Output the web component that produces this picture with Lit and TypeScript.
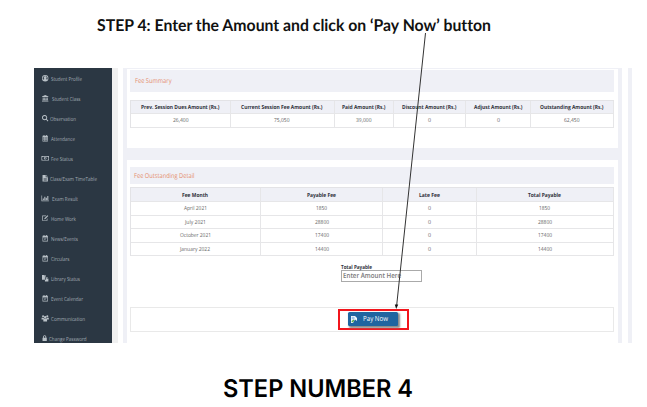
import { LitElement, html, svg, css } from "lit";
import { customElement } from "lit/decorators.js";

type Column = { title: string; titleWidth: number; cells: [string, number][] };

const label = (text: string, width: number, kind = "") => html`
  <svg class="label ${kind}" width=${width} height="10" viewBox="0 0 ${width} 10">
    <text x="0" y="7" textLength=${width} lengthAdjust="spacingAndGlyphs">${text}</text>
  </svg>`;

const calendar = svg`<path fill-rule="evenodd" d="M1 1.5h2V0h1.5v1.5h3V0H9v1.5h2V12H1zM2.2 4.5v6.3h7.6V4.5z"/><path d="M3.4 7l.8-.8 1.3 1.2 2.2-2 .8.9-3 2.9z"/>`;

const icons: Record<string, unknown> = {
  user: svg`<path fill-rule="evenodd" d="M6 0a6 6 0 110 12A6 6 0 016 0zm0 1.3A4.7 4.7 0 002.5 9.1c.5-1 1.2-1.5 2-1.6a2.8 2.8 0 113 0c.8.1 1.5.6 2 1.6A4.7 4.7 0 006 1.3z"/>`,
  bank: svg`<path d="M6 0l6 2.7v1H0v-1zM1.3 4.5h1.8v4.5h1.2V4.5h1.5v4.5h1V4.5h1.5v4.5h.8V4.5h1.6v4.5h.6v1H.7V9h.6zM0 10.7h12V12H0z"/>`,
  search: svg`<path fill-rule="evenodd" d="M4.9 0a4.9 4.9 0 014 7.7L12 10.8 10.8 12 7.7 8.9A4.9 4.9 0 114.9 0zm0 1.7a3.2 3.2 0 100 6.4 3.2 3.2 0 000-6.4z"/>`,
  grid: svg`<path fill-rule="evenodd" d="M1 1.5h2V0h1.5v1.5h3V0H9v1.5h2V12H1zM2 4.5v1.7h2V4.5zm3 0v1.7h2V4.5zm3 0v1.7h2V4.5zM2 7v1.5h2V7zm3 0v1.5h2V7zm3 0v1.5h2V7zM2 9.3V11h2V9.300zm3 0V11h2V9.300zm3 0V11h2V9.300z"/>`,
  money: svg`<path fill-rule="evenodd" d="M-1 2h14v8.500H-1zM1.500 3.200L.2 4.500V8l1.300 1.300h9L11.800 8V4.500l-1.300-1.300zM6 3.600a2.600 2.600 0 110 5.200 2.600 2.600 0 010-5.200zm-.7 1.200v3h1.600v-3z"/>`,
  file: svg`<path fill-rule="evenodd" d="M1 0h6v4h4v8H1zM8 0l3 3H8zM3 5.500v.9h6v-.9zm0 1.900v.9h6v-.9zm0 1.900v.9h6v-.9z"/>`,
  chart: svg`<path d="M-1 1H.2v9.500H13v1.200H-1zM1.500 6.500h2v3h-2zM4.300 3.500h2v6h-2zM7.100 5h2v4.500h-2zM9.900 2h2v7.500h-2z"/>`,
  edit: svg`<path fill-rule="evenodd" d="M1 1h7L6.800 2.300H1.700v7.500h7.200V7.500l1.300-1.300V11H.4V1zM10.300.6l1.500 1.500-5.500 5.500-2.200.6.6-2.200z"/>`,
  calendar,
  copy: svg`<path fill-rule="evenodd" d="M0 0h5v2.500h2V9H0zM5.500 4H9v3h3v5H5.500zM9.800 3.800L12 6.200H9.800zM5.800 0l2 2h-2z"/>`,
  users: svg`<path d="M6 2a2.300 2.300 0 110 4.600A2.300 2.300 0 016 2zM2 .5a1.900 1.900 0 110 3.800A1.900 1.900 0 012 .5zm8 0a1.900 1.900 0 110 3.800 1.900 1.900 0 010-3.800zM-.8 5h3.500l1.500 2-1.500 1.500H-.8zM12.800 5H9.300L7.800 7l1.500 1.500h3.500zM3.800 7h4.400L9.500 9v3h-7V9z"/>`,
  lock: svg`<path fill-rule="evenodd" d="M1 5.200h1V3.500a3 3 0 016 0V5.200h1V11.500H1zM3.600 5.200h2.800V3.500a1.400 1.400 0 00-2.800 0z"/>`,
};

const menu: [string, string, number, number][] = [
  ["user", "Student Profile", 31, 51],
  ["bank", "Student Class", 28.5, 51.5],
  ["search", "Observation", 26, 50],
  ["grid", "Attendance", 24, 50.5],
  ["money", "Fee Status", 22, 51],
  ["file", "Class/Exam TimeTable", 47, 50],
  ["chart", "Exam Result", 26, 51.5],
  ["edit", "Home Work", 25, 51],
  ["calendar", "News/Events", 27, 51],
  ["calendar", "Circulars", 18.5, 50.5],
  ["copy", "Library Status", 29, 51],
  ["calendar", "Event Calendar", 32, 51],
  ["users", "Communication", 34, 51],
  ["lock", "Change Password", 37.5, 49],
];

const summary: Column[] = [
  { title: "Prev. Session Dues Amount (Rs.)", titleWidth: 78.5, cells: [["26,400", 15.5]] },
  { title: "Current Session Fee Amount (Rs.)", titleWidth: 81.5, cells: [["75,050", 15.5]] },
  { title: "Paid Amount (Rs.)", titleWidth: 43.5, cells: [["39,000", 15.5]] },
  { title: "Discount Amount (Rs.)", titleWidth: 54.5, cells: [["0", 3]] },
  { title: "Adjust Amount (Rs.)", titleWidth: 48.5, cells: [["0", 3]] },
  { title: "Outstanding Amount (Rs.)", titleWidth: 63.5, cells: [["62,450", 15.5]] },
];

const detail: Column[] = [
  { title: "Fee Month", titleWidth: 26, cells: [["April 2021", 23], ["July 2021", 21], ["October 2021", 31], ["January 2022", 30]] },
  { title: "Payable Fee", titleWidth: 29, cells: [["1850", 11], ["28800", 14], ["17400", 14], ["14400", 14]] },
  { title: "Late Fee", titleWidth: 21, cells: [["0", 3], ["0", 3], ["0", 3], ["0", 3]] },
  { title: "Total Payable", titleWidth: 33, cells: [["1850", 11], ["28800", 14], ["17400", 14], ["14400", 14]] },
];

const table = (columns: Column[], kind: string) => html`
  <div class="table ${kind}">
    ${columns.map((c) => html`
      <div class="column">
        <div class="cell head">${label(c.title, c.titleWidth, "bold")}</div>
        ${c.cells.map(([text, width]) => html`<div class="cell">${label(text, width)}</div>`)}
      </div>`)}
  </div>`;

@customElement("app-root")
export class AppRoot extends LitElement {
  static styles = css`
    :host { display: block; position: relative; width: 647px; height: 407px; overflow: hidden; background: #fff;
      font-family: "Open Sans", "Noto Sans", sans-serif; }
    * { box-sizing: border-box; }
    svg { display: block; flex: none; overflow: visible; }
    text { text-rendering: geometricPrecision; }
    .title { height: 68px; padding: 12px 0 0 97px; }
    .title text { font: 700 16.4px Lato, sans-serif; fill: #111; font-variant-ligatures: none; }
    .footer { padding: 31px 0 0 222.5px; }
    .footer text { font: 600 24.5px Inter, sans-serif; fill: #000; }
    .label text { font-size: 5.6px; fill: #666; }
    .label.bold text { font-weight: 700; fill: #30323b; }
    .label.section text { font-size: 6.7px; fill: #e58d6c; }
    .label.item text { fill: #a4adb5; }
    .label.pay text { font-size: 7.2px; fill: #fff; }
    .label.hint text { font-size: 7.2px; font-weight: 600; fill: #777; }
    .screen { display: flex; width: 598px; height: 274.5px; margin-left: 34px; overflow: hidden; }
    .sidebar { width: 77.5px; flex: none; background: #2b3743; padding-top: 0.5px; }
    .item-row { display: grid; grid-template-columns: auto 1fr; height: 20px; align-items: center; padding-left: 7.5px; }
    .icon { width: 6.4px; height: 6.4px; fill: #b9c1c7; }
    .icon-slot { display: block; }
    .rail { width: 6.5px; flex: none; background: #f0f0f0; }
    .gutter { width: 5px; flex: none; background: #fff; }
    .content { width: 499px; flex: none; background: #eff0f6; padding: 1px 4px 0 4px; }
    .edge { width: 4px; margin-left: 6px; background: #eff0f6; }
    .card { background: #fff; padding: 0 4px 0 3px; }
    .summary-card { height: 79px; padding-top: 1px; }
    .detail-card { margin-top: 12px; height: 183px; padding-top: 7px; }
    .section-head { background: #eff0f6; display: flex; align-items: center; }
    .summary-card .section-head { height: 22px; padding-left: 5px; margin-bottom: 8px; }
    .detail-card .section-head { height: 17px; padding-left: 3.5px; margin-bottom: 3px; }
    .table { display: grid; border: 1px solid #e3e3e6; border-width: 1px 0 0 1px; }
    .summary { grid-template-columns: 100fr 104fr 59.5fr 72.5fr 65fr 83fr; }
    .detail { grid-template-columns: 130fr 123fr 93.5fr 137.5fr; }
    .cell { height: 13.6px; display: flex; justify-content: center; align-items: center; border: 1px solid #e6e6e8; border-width: 0 1px 1px 0; }
    .head { background: #eff0f6; }
    .summary .head { height: 13px; }
    .detail .head { height: 14px; }
    .amount { width: 81px; margin: 6px 0 0 211px; }
    .amount > .label { margin-bottom: -2px; }
    .field { height: 12px; border: 1px solid #aaa; display: flex; align-items: center; padding-left: 1px; }
    .action { margin-top: 24.5px; height: 25px; border: 1px solid #e9e9e9; display: flex; align-items: center; padding-left: 207px; }
    .highlight { width: 71px; height: 21.5px; flex: none; border: 2px solid #f2151c; display: flex; align-items: center; padding-left: 8px; }
    .button { width: 49.5px; height: 14px; display: flex; align-items: center; gap: 6px; padding-left: 3px; background: #2065a0;
      border-radius: 1.5px; box-shadow: 1.5px 1.5px 2px #888; }
    .arrow { position: absolute; left: 0; top: 0; }
  `;

  render() {
    return html`
      <div class="title">
        <svg width="394" height="24"><text x="0" y="18.5" textLength="394" lengthAdjust="spacingAndGlyphs">STEP 4: Enter the Amount and click on ‘Pay Now’ button</text></svg>
      </div>
      <div class="screen">
        <div class="sidebar">
          ${menu.map(([icon, text, width, x]) => html`
            <div class="item-row">
              <span class="icon-slot" style="width:${x - 41.5}px"><svg class="icon" viewBox="0 0 12 12">${icons[icon]}</svg></span>
              ${label(text, width, "item")}
            </div>`)}
        </div>
        <div class="rail"></div>
        <div class="gutter"></div>
        <div class="content">
          <div class="card summary-card">
            <div class="section-head">${label("Fee Summary", 36.5, "section")}</div>
            ${table(summary, "summary")}
          </div>
          <div class="card detail-card">
            <div class="section-head">${label("Fee Outstanding Detail", 60.5, "section")}</div>
            ${table(detail, "detail")}
            <div class="amount">
              ${label("Total Payable", 31, "bold")}
              <div class="field">${label("Enter Amount Here", 58, "hint")}</div>
            </div>
            <div class="action">
              <div class="highlight">
                <div class="button">
                  <svg width="6" height="7" viewBox="0 0 6 7">
                    <path fill="#f4f8fb" d="M0 0h4l2 2v3L4 3.5 2 7H0z"/>
                    <path fill="#9fc4ea" d="M.7.8h2.8v2.5H.7z"/>
                    <path fill="#58a84a" d="M.6 6.2V5l2-1.5 1 .8L2 6.2z"/>
                  </svg>
                  ${label("Pay Now", 25, "pay")}
                </div>
              </div>
            </div>
          </div>
        </div>
        <div class="edge"></div>
      </div>
      <div class="footer">
        <svg width="190" height="30"><text x="0" y="22.5" textLength="190" lengthAdjust="spacingAndGlyphs">STEP NUMBER 4</text></svg>
      </div>
      <svg class="arrow" width="647" height="407">
        <path d="M425.5 33L396.6 306" stroke="#333" stroke-width="1" fill="none"/>
        <path d="M394.8 304.5h3.4L396.2 309z" fill="#111"/>
      </svg>`;
  }
}
